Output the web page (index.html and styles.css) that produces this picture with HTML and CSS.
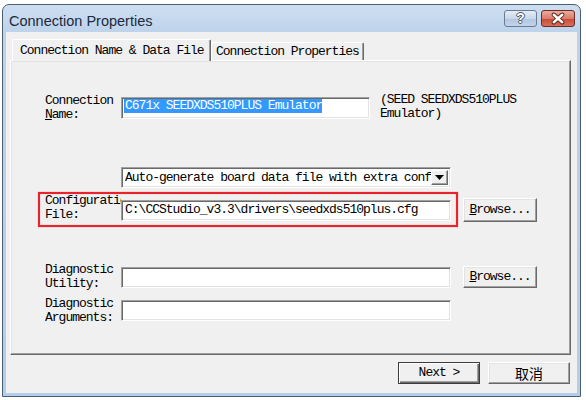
FILE: index.html
```html
<!DOCTYPE html>
<html>
<head>
<meta charset="utf-8">
<link rel="stylesheet" href="styles.css">
</head>
<body>
<div class="window">
  <div class="titlebar">
    <span class="title">Connection Properties</span>
    <div class="caption">
      <span class="cbtn help">?</span>
      <span class="cbtn close">
        <svg width="34" height="17" viewBox="0 0 34 17">
          <path d="M12.5 4.5 L21.5 12.5 M21.5 4.5 L12.5 12.5" stroke="#5a1c14" stroke-width="4.6" stroke-linecap="round"/>
          <path d="M12.5 4.5 L21.5 12.5 M21.5 4.5 L12.5 12.5" stroke="#ffffff" stroke-width="2.6" stroke-linecap="round"/>
        </svg>
      </span>
    </div>
  </div>
  <div class="client dlg">
    <div class="tabs">
      <div class="tab tab-active">Connection Name &amp; Data File</div>
      <div class="tab tab-other">Connection Properties</div>
    </div>
    <div class="panel">
      <div class="row row-name">
        <div class="lbl">Connection<br><u>N</u>ame:</div>
        <div class="edit edit-name"><span class="sel">C671x SEEDXDS510PLUS Emulator</span></div>
        <div class="note">(SEED SEEDXDS510PLUS<br>Emulator)</div>
      </div>
      <div class="row row-combo">
        <div class="combo">
          <span class="combo-text">Auto-generate board data file with extra conf</span>
          <span class="drop"><svg width="9" height="5" viewBox="0 0 9 5"><path d="M0 0 H9 L4.5 5 Z" fill="#000"/></svg></span>
        </div>
      </div>
      <div class="row row-config">
        <div class="lbl">Configuration<br>File:</div>
        <div class="edit edit-config">C:\CCStudio_v3.3\drivers\seedxds510plus.cfg</div>
        <div class="btn browse browse-config"><u>B</u>rowse...</div>
      </div>
      <div class="row row-util">
        <div class="lbl">Diagnostic<br>Utility:</div>
        <div class="edit edit-util"></div>
        <div class="btn browse browse-util"><u>B</u>rowse...</div>
      </div>
      <div class="row row-args">
        <div class="lbl">Diagnostic<br>Arguments:</div>
        <div class="edit edit-args"></div>
      </div>
      <div class="mark"></div>
    </div>
    <div class="footer">
      <div class="btn btn-default">Next &gt;</div>
      <div class="btn btn-cancel">取消</div>
    </div>
  </div>
</div>
</body>
</html>
```

FILE: styles.css
```css
body {
  margin: 0;
  background: #ffffff;
}

.window {
  margin: 4px 0 0 2px;
  width: 579px;
  height: 393px;
  box-sizing: border-box;
  border: 1px solid #4d5e73;
  border-radius: 7px 7px 0 0;
  background: linear-gradient(#cddef1 0px, #bdd3eb 28px, #b4cde8 100%);
  padding: 0 3px 3px;
  display: flex;
  flex-direction: column;
}

.titlebar {
  height: 27px;
  display: flex;
  align-items: flex-start;
  justify-content: space-between;
}

.title {
  font-family: "Liberation Sans", Arial, sans-serif;
  font-size: 14.5px;
  line-height: 17px;
  color: #1b2a3c;
  padding: 8px 0 0 3px;
}

.caption {
  display: flex;
  gap: 4px;
  margin: 5px 2px 0 0;
}

.cbtn {
  height: 17px;
  box-sizing: border-box;
  border-radius: 3px;
  display: flex;
  align-items: center;
  justify-content: center;
}

.help {
  width: 33px;
  border: 1px solid #6a7c92;
  background: linear-gradient(#e4ecf6 0%, #c9d7e8 50%, #b3c6dd 51%, #c2d4ea 100%);
  font-family: "Liberation Sans", Arial, sans-serif;
  font-weight: bold;
  font-size: 14px;
  line-height: 15px;
  color: #ffffff;
  text-shadow: -1px 0 #4a5565, 1px 0 #4a5565, 0 -1px #4a5565, 0 1px #4a5565;
}

.close {
  width: 34px;
  border: 1px solid #6b2a22;
  background: linear-gradient(#ecaa9c 0%, #dc7c6a 50%, #c74a36 51%, #d6715c 100%);
}

.client {
  flex: 1;
  background: #f0f0f0;
  display: flex;
  flex-direction: column;
}

.dlg {
  font-family: "Liberation Mono", "Courier New", monospace;
  font-size: 13px;
  letter-spacing: -1px;
  line-height: 14px;
  color: #000000;
}

.tabs {
  margin: 7px 0 0 6px;
  height: 21px;
  display: flex;
  align-items: flex-end;
}

.tab {
  box-sizing: border-box;
  background: #f0f0f0;
  border-left: 1px solid #ffffff;
  border-top: 1px solid #ffffff;
  border-right: 1px solid #696969;
  box-shadow: inset -1px 0 #a0a0a0;
  border-radius: 2px 2px 0 0;
  white-space: nowrap;
}

.tab-active {
  width: 199px;
  height: 22px;
  margin-bottom: -1px;
  padding: 4px 0 0 7px;
  position: relative;
  z-index: 1;
}

.tab-other {
  width: 153px;
  height: 18px;
  padding: 2px 0 0 4px;
}

.panel {
  position: relative;
  margin-left: 4px;
  width: 561px;
  height: 295px;
  box-sizing: border-box;
  border-top: 1px solid #ffffff;
  border-left: 1px solid #ffffff;
  border-right: 1px solid #696969;
  border-bottom: 1px solid #696969;
  box-shadow: inset -1px -1px #a0a0a0, inset 1px 1px #e3e3e3;
  padding-left: 34px;
  display: flex;
  flex-direction: column;
}

.row {
  display: flex;
  align-items: flex-start;
}

.lbl {
  width: 76px;
  height: 28px;
  overflow: hidden;
  white-space: nowrap;
  flex: none;
}

.edit {
  box-sizing: border-box;
  height: 21px;
  background: #ffffff;
  border: 1px solid;
  border-color: #a0a0a0 #ffffff #ffffff #a0a0a0;
  box-shadow: inset 1px 1px #696969, inset -1px -1px #e3e3e3;
  padding: 2px 0 0 3px;
  white-space: nowrap;
  overflow: hidden;
  flex: none;
}

.row-name { margin-top: 33px; }
.row-combo { margin-top: 45px; padding-left: 76px; }
.row-config { margin-top: 6px; }
.row-util { margin-top: 41px; }
.row-args { margin-top: 6px; }

.edit-name {
  width: 249px;
  height: 22px;
  margin-top: 3px;
  padding: 1px 0 0 2px;
}

.sel {
  display: inline-block;
  background: #3399ff;
  color: #ffffff;
  padding-left: 1px;
}

.note {
  margin: -1px 0 0 10px;
  white-space: nowrap;
}

.edit-config { width: 330px; margin-top: 6px; }
.edit-util { width: 330px; margin-top: 4px; }
.edit-args { width: 330px; margin-top: 3px; }

.combo {
  width: 330px;
  height: 21px;
  box-sizing: border-box;
  background: #ffffff;
  border: 1px solid;
  border-color: #a0a0a0 #ffffff #ffffff #a0a0a0;
  box-shadow: inset 1px 1px #696969, inset -1px -1px #e3e3e3;
  display: flex;
  align-items: stretch;
  padding: 2px 2px 2px 3px;
}

.combo-text {
  flex: 1;
  white-space: nowrap;
  overflow: hidden;
  padding-top: 1px;
}

.drop {
  width: 17px;
  box-sizing: border-box;
  background: #f0f0f0;
  border: 1px solid;
  border-color: #ffffff #696969 #696969 #ffffff;
  box-shadow: inset -1px -1px #a0a0a0;
  display: flex;
  align-items: center;
  justify-content: center;
}

.btn {
  box-sizing: border-box;
  background: #f0f0f0;
  border: 1px solid;
  border-color: #ffffff #696969 #696969 #ffffff;
  box-shadow: inset -1px -1px #a0a0a0, inset 1px 1px #e3e3e3;
  display: flex;
  align-items: center;
  justify-content: center;
  white-space: nowrap;
  flex: none;
}

.browse {
  width: 74px;
  margin-left: 12px;
}

.browse-config { height: 24px; margin-top: 4px; }
.browse-util { height: 22px; margin-top: 3px; }

.mark {
  position: absolute;
  left: 27px;
  top: 131px;
  width: 420px;
  height: 35px;
  box-sizing: border-box;
  border: 2px solid #e8232b;
  box-shadow: 0 0 1px #f07070, inset 0 0 1px #f07070;
}

.footer {
  display: flex;
  justify-content: flex-end;
  gap: 8px;
  margin-top: 7px;
  padding-right: 7px;
}

.footer .btn {
  width: 82px;
  height: 22px;
}

.btn-default {
  border: 1px solid #3c3c3c;
  box-shadow: inset 1px 1px #ffffff, inset -1px -1px #696969, inset -2px -2px #a0a0a0;
}

.btn-cancel {
  font-family: "Noto Sans CJK SC", sans-serif;
  font-size: 14px;
  letter-spacing: 0;
}
```
